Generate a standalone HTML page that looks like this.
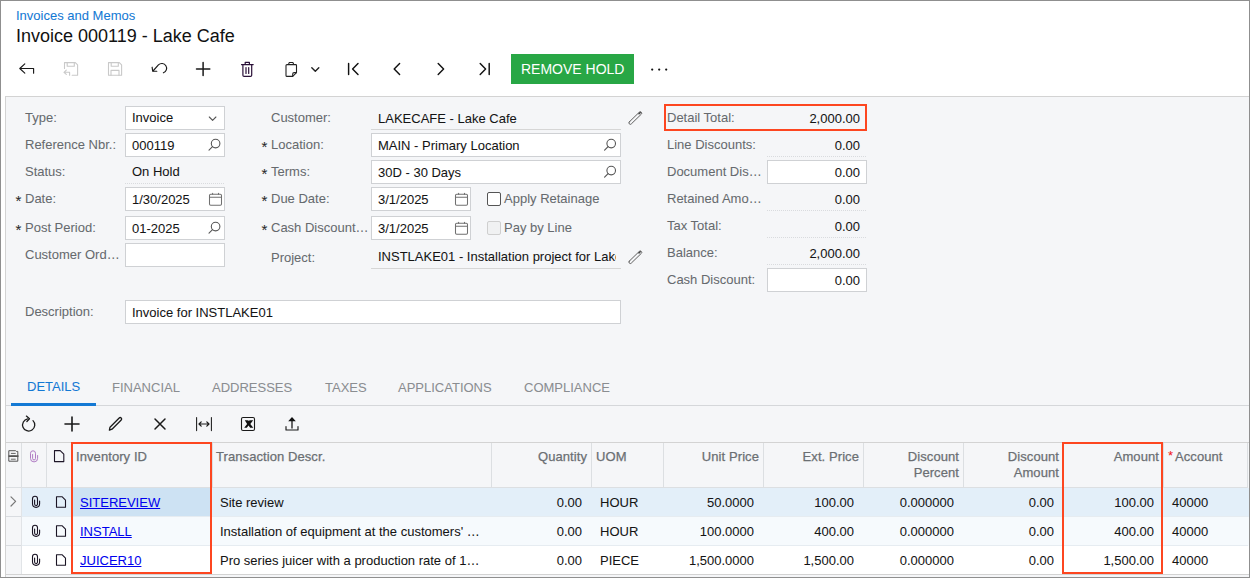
<!DOCTYPE html>
<html><head><meta charset="utf-8">
<style>
*{box-sizing:border-box;margin:0;padding:0}
html,body{width:1250px;height:578px;overflow:hidden;background:#fff}
body{position:relative;font-family:"Liberation Sans",sans-serif;font-size:13px;color:#000}
.a{position:absolute}
.t{position:absolute;white-space:nowrap;height:16px;-webkit-text-stroke:0.05px currentColor}
</style></head><body>
<div class="t" style="left:16px;top:8px;font-size:13px;line-height:16px;color:#1479d4;font-weight:normal;">Invoices and Memos</div>
<div class="t" style="left:16px;top:26px;font-size:18px;line-height:20px;color:#111;font-weight:normal;-webkit-text-stroke:0">Invoice 000119 - Lake Cafe</div>
<svg width="1250" height="578" style="left:0;top:0;position:absolute;overflow:visible" fill="none" stroke-linecap="round" stroke-linejoin="round" >
 <g stroke="#1a1a1a" stroke-width="1.15">
  <path d="M19.8 68.5 L24.8 63.8 M19.8 68.5 L24.8 73.2 M19.8 68.5 H33.6 V73.2"/>
 </g>
 <g stroke="#c9c9c9" stroke-width="1.1">
  <path d="M64.5 68.5 V62.6 H75.3 L77.6 64.9 V75.2 H72.2"/>
  <path d="M67.2 62.6 V66.2 H74.3 V62.6"/>
  <path d="M64 72.3 L66.3 70.2 M64 72.3 L66.3 74.4 M64 72.3 H69.6 V75.3"/>
  <path d="M108.5 62.6 H119.3 L121.6 64.9 V75.3 H108.5 Z"/>
  <path d="M111.2 62.6 V66.2 H118.3 V62.6 M111 75.3 V70.4 H119 V75.3"/>
 </g>
 <g stroke="#1a1a1a" stroke-width="1.15">
  <path d="M153 71 L158.4 64.9 A4.8 4.8 0 1 1 163.4 72.8"/>
  <path d="M152.1 67.2 L152.7 71.2 L156.8 71.2"/>
  <path d="M196.5 69 H209.8 M203.1 62.4 V75.6" stroke-width="1.5"/>
 </g>
 <g stroke="#2a1038" stroke-width="1.2">
  <path d="M241.5 64.6 H253.2 M245.2 64.4 V62.4 H249.4 V64.4"/>
  <path d="M242.9 64.8 V75.2 Q242.9 76.4 244.1 76.4 H250.5 Q251.7 76.4 251.7 75.2 V64.8"/>
  <path d="M246 67.5 V73.4 M248.7 67.5 V73.4"/>
 </g>
 <g stroke="#222" stroke-width="1.1">
  <path d="M286 65.6 Q286 64.6 287 64.6 H295.7 Q296.5 64.6 296.5 65.4 V72.6 L292.7 76.4 H287 Q286 76.4 286 75.4 Z"/>
  <path d="M288.5 64.4 L289.3 62.5 H292.9 L293.7 64.4"/>
  <path d="M292.7 76.2 V74 Q292.7 72.6 294.1 72.6 H296.4"/>
  <path d="M311.8 67.8 L315.3 71.3 L318.8 67.8" stroke-width="1.4"/>
 </g>
 <g stroke="#111" stroke-width="1.45">
  <path d="M348.6 63.4 V74.6 M358 63.6 L352.6 69 L358 74.4"/>
  <path d="M399.6 63.6 L394.2 69 L399.6 74.4"/>
  <path d="M438.2 63.6 L443.6 69 L438.2 74.4"/>
  <path d="M480.2 63.6 L485.6 69 L480.2 74.4 M489.2 63.4 V74.6"/>
 </g>
 <g fill="#111" stroke="none">
  <circle cx="652.2" cy="69.6" r="1.1"/><circle cx="659.2" cy="69.6" r="1.1"/><circle cx="666.2" cy="69.6" r="1.1"/>
 </g></svg>
<div class="a" style="left:511px;top:54px;width:123px;height:30px;background:#28a745"></div>
<div class="t" style="left:521px;top:61px;font-size:14px;line-height:16px;color:#fff;font-weight:normal;-webkit-text-stroke:0">REMOVE HOLD</div>
<div class="a" style="left:5px;top:96px;width:1245px;height:482px;background:#f5f6f8;border-top:1px solid #d3d3d3;border-left:1px solid #d3d3d3"></div>
<div class="a" style="left:125px;top:106px;width:100px;height:24px;background:#fff;border:1px solid #cfd1d4"></div>
<div class="a" style="left:125px;top:133px;width:100px;height:24px;background:#fff;border:1px solid #cfd1d4"></div>
<div class="a" style="left:125px;top:183px;width:100px;height:1px;background-image:linear-gradient(to right,#d9dbde 50%,transparent 50%);background-size:2px 1px"></div>
<div class="a" style="left:125px;top:187px;width:100px;height:24px;background:#fff;border:1px solid #cfd1d4"></div>
<div class="a" style="left:125px;top:216px;width:100px;height:24px;background:#fff;border:1px solid #cfd1d4"></div>
<div class="a" style="left:125px;top:243px;width:100px;height:24px;background:#fff;border:1px solid #cfd1d4"></div>
<div class="a" style="left:125px;top:300px;width:496px;height:24px;background:#fff;border:1px solid #cfd1d4"></div>
<div class="t" style="left:25px;top:110px;font-size:13px;line-height:16px;color:#666a6e;font-weight:normal;">Type:</div>
<div class="t" style="left:132px;top:110px;font-size:13px;line-height:16px;color:#141414;font-weight:normal;">Invoice</div>
<div class="t" style="left:25px;top:137px;font-size:13px;line-height:16px;color:#666a6e;font-weight:normal;">Reference Nbr.:</div>
<div class="t" style="left:132px;top:138px;font-size:13px;line-height:16px;color:#141414;font-weight:normal;">000119</div>
<div class="t" style="left:25px;top:164px;font-size:13px;line-height:16px;color:#666a6e;font-weight:normal;">Status:</div>
<div class="t" style="left:132px;top:164px;font-size:13px;line-height:16px;color:#141414;font-weight:normal;">On Hold</div>
<div class="t" style="left:15.5px;top:193px;font-size:15px;line-height:16px;color:#2a2a2a">*</div>
<div class="t" style="left:25px;top:191px;font-size:13px;line-height:16px;color:#666a6e;font-weight:normal;">Date:</div>
<div class="t" style="left:132px;top:192px;font-size:13px;line-height:16px;color:#141414;font-weight:normal;">1/30/2025</div>
<div class="t" style="left:15.5px;top:222px;font-size:15px;line-height:16px;color:#2a2a2a">*</div>
<div class="t" style="left:25px;top:220px;font-size:13px;line-height:16px;color:#666a6e;font-weight:normal;">Post Period:</div>
<div class="t" style="left:132px;top:221px;font-size:13px;line-height:16px;color:#141414;font-weight:normal;">01-2025</div>
<div class="t" style="left:25px;top:247px;font-size:13px;line-height:16px;color:#666a6e;font-weight:normal;">Customer Ord&hellip;</div>
<div class="t" style="left:25px;top:304px;font-size:13px;line-height:16px;color:#666a6e;font-weight:normal;">Description:</div>
<div class="t" style="left:132px;top:305px;font-size:13px;line-height:16px;color:#141414;font-weight:normal;">Invoice for INSTLAKE01</div>
<div class="a" style="left:371px;top:129px;width:250px;height:1px;background:#d6d6d6"></div>
<div class="a" style="left:371px;top:133px;width:250px;height:24px;background:#fff;border:1px solid #cfd1d4"></div>
<div class="a" style="left:371px;top:160px;width:250px;height:24px;background:#fff;border:1px solid #cfd1d4"></div>
<div class="a" style="left:371px;top:187px;width:100px;height:24px;background:#fff;border:1px solid #cfd1d4"></div>
<div class="a" style="left:371px;top:216px;width:100px;height:24px;background:#fff;border:1px solid #cfd1d4"></div>
<div class="a" style="left:371px;top:268px;width:250px;height:1px;background:#d6d6d6"></div>
<div class="t" style="left:271px;top:110px;font-size:13px;line-height:16px;color:#666a6e;font-weight:normal;">Customer:</div>
<div class="t" style="left:378px;top:111px;font-size:13px;line-height:16px;color:#141414;font-weight:normal;">LAKECAFE - Lake Cafe</div>
<div class="t" style="left:261.5px;top:139px;font-size:15px;line-height:16px;color:#2a2a2a">*</div>
<div class="t" style="left:271px;top:137px;font-size:13px;line-height:16px;color:#666a6e;font-weight:normal;">Location:</div>
<div class="t" style="left:378px;top:138px;font-size:13px;line-height:16px;color:#141414;font-weight:normal;">MAIN - Primary Location</div>
<div class="t" style="left:261.5px;top:166px;font-size:15px;line-height:16px;color:#2a2a2a">*</div>
<div class="t" style="left:271px;top:164px;font-size:13px;line-height:16px;color:#666a6e;font-weight:normal;">Terms:</div>
<div class="t" style="left:378px;top:165px;font-size:13px;line-height:16px;color:#141414;font-weight:normal;">30D - 30 Days</div>
<div class="t" style="left:261.5px;top:193px;font-size:15px;line-height:16px;color:#2a2a2a">*</div>
<div class="t" style="left:271px;top:191px;font-size:13px;line-height:16px;color:#666a6e;font-weight:normal;">Due Date:</div>
<div class="t" style="left:378px;top:192px;font-size:13px;line-height:16px;color:#141414;font-weight:normal;">3/1/2025</div>
<div class="t" style="left:261.5px;top:222px;font-size:15px;line-height:16px;color:#2a2a2a">*</div>
<div class="t" style="left:271px;top:220px;font-size:13px;line-height:16px;color:#666a6e;font-weight:normal;">Cash Discount&hellip;</div>
<div class="t" style="left:378px;top:221px;font-size:13px;line-height:16px;color:#141414;font-weight:normal;">3/1/2025</div>
<div class="t" style="left:271px;top:250px;font-size:13px;line-height:16px;color:#666a6e;font-weight:normal;">Project:</div>
<div class="t" style="left:378px;top:249px;width:238px;overflow:hidden;font-size:13px;line-height:16px;color:#141414">INSTLAKE01 - Installation project for Lake Cafe</div>
<div class="a" style="left:487px;top:192px;width:14px;height:14px;background:#fff;border:1.5px solid #555;border-radius:2px"></div>
<div class="a" style="left:487px;top:221px;width:14px;height:14px;background:#f0f1f2;border:1px solid #cfcfcf;border-radius:2px"></div>
<div class="t" style="left:504px;top:191px;font-size:13px;line-height:16px;color:#666a6e;font-weight:normal;">Apply Retainage</div>
<div class="t" style="left:504px;top:220px;font-size:13px;line-height:16px;color:#666a6e;font-weight:normal;">Pay by Line</div>
<div class="a" style="left:767px;top:156px;width:100px;height:1px;background-image:linear-gradient(to right,#d9dbde 50%,transparent 50%);background-size:2px 1px"></div>
<div class="a" style="left:767px;top:160px;width:100px;height:24px;background:#fff;border:1px solid #cfd1d4"></div>
<div class="a" style="left:767px;top:210px;width:100px;height:1px;background-image:linear-gradient(to right,#d9dbde 50%,transparent 50%);background-size:2px 1px"></div>
<div class="a" style="left:767px;top:237px;width:100px;height:1px;background-image:linear-gradient(to right,#d9dbde 50%,transparent 50%);background-size:2px 1px"></div>
<div class="a" style="left:767px;top:264px;width:100px;height:1px;background-image:linear-gradient(to right,#d9dbde 50%,transparent 50%);background-size:2px 1px"></div>
<div class="a" style="left:767px;top:268px;width:100px;height:24px;background:#fff;border:1px solid #cfd1d4"></div>
<div class="t" style="left:667px;top:110px;font-size:13px;line-height:16px;color:#666a6e;font-weight:normal;">Detail Total:</div>
<div class="t" style="right:390px;top:111px;font-size:13px;line-height:16px;color:#141414;font-weight:normal;text-align:right;">2,000.00</div>
<div class="t" style="left:667px;top:137px;font-size:13px;line-height:16px;color:#666a6e;font-weight:normal;">Line Discounts:</div>
<div class="t" style="right:390px;top:138px;font-size:13px;line-height:16px;color:#141414;font-weight:normal;text-align:right;">0.00</div>
<div class="t" style="left:667px;top:164px;font-size:13px;line-height:16px;color:#666a6e;font-weight:normal;">Document Dis&hellip;</div>
<div class="t" style="right:390px;top:165px;font-size:13px;line-height:16px;color:#141414;font-weight:normal;text-align:right;">0.00</div>
<div class="t" style="left:667px;top:191px;font-size:13px;line-height:16px;color:#666a6e;font-weight:normal;">Retained Amo&hellip;</div>
<div class="t" style="right:390px;top:192px;font-size:13px;line-height:16px;color:#141414;font-weight:normal;text-align:right;">0.00</div>
<div class="t" style="left:667px;top:218px;font-size:13px;line-height:16px;color:#666a6e;font-weight:normal;">Tax Total:</div>
<div class="t" style="right:390px;top:219px;font-size:13px;line-height:16px;color:#141414;font-weight:normal;text-align:right;">0.00</div>
<div class="t" style="left:667px;top:245px;font-size:13px;line-height:16px;color:#666a6e;font-weight:normal;">Balance:</div>
<div class="t" style="right:390px;top:246px;font-size:13px;line-height:16px;color:#141414;font-weight:normal;text-align:right;">2,000.00</div>
<div class="t" style="left:667px;top:272px;font-size:13px;line-height:16px;color:#666a6e;font-weight:normal;">Cash Discount:</div>
<div class="t" style="right:390px;top:273px;font-size:13px;line-height:16px;color:#141414;font-weight:normal;text-align:right;">0.00</div>
<svg width="1250" height="578" style="left:0;top:0;position:absolute;overflow:visible" fill="none" stroke-linecap="round" stroke-linejoin="round" ><g stroke="#555" stroke-width="1.1"><path d="M209.3 117 L212.6 120.3 L215.9 117"/><circle cx="215.6" cy="143.6" r="4.3"/><path d="M212.5 146.7 L209.0 150.2"/><circle cx="215.6" cy="226.6" r="4.3"/><path d="M212.5 229.7 L209.0 233.2"/><circle cx="611.2" cy="143.6" r="4.3"/><path d="M608.1 146.7 L604.6 150.2"/><circle cx="611.2" cy="170.6" r="4.3"/><path d="M608.1 173.7 L604.6 177.2"/><g stroke="#707070" stroke-width="1.05"><rect x="209.5" y="194.3" width="12" height="11" rx="1.2"/><path d="M209.5 197.2 H221.5 M212.6 193.2 V194.2 M218.5 193.2 V194.2"/></g><g stroke="#707070" stroke-width="1.05"><rect x="455.5" y="194.3" width="12" height="11" rx="1.2"/><path d="M455.5 197.2 H467.5 M458.6 193.2 V194.2 M464.5 193.2 V194.2"/></g><g stroke="#707070" stroke-width="1.05"><rect x="455.5" y="223.3" width="12" height="11" rx="1.2"/><path d="M455.5 226.2 H467.5 M458.6 222.2 V223.2 M464.5 222.2 V223.2"/></g></g><g><path d="M629.3 121.89999999999999 L639.3 112.19999999999999 A1.4 1.4 0 0 1 641.3 114.19999999999999 L631.3 123.89999999999999 A1.4 1.4 0 0 1 629.3 121.89999999999999 Z" stroke="#606060" stroke-width="1"/><path d="M639.0 113.69999999999999 L640.2 112.6" stroke="#444" stroke-width="1.5"/><path d="M629.3 261.1 L639.3 251.4 A1.4 1.4 0 0 1 641.3 253.4 L631.3 263.1 A1.4 1.4 0 0 1 629.3 261.1 Z" stroke="#606060" stroke-width="1"/><path d="M639.0 252.9 L640.2 251.8" stroke="#444" stroke-width="1.5"/></g></svg>
<div class="a" style="left:664px;top:104px;width:203px;height:27px;border:2px solid #fd4620"></div>
<div class="t" style="left:27px;top:379px;font-size:13px;line-height:16px;color:#1479d4;font-weight:normal;">DETAILS</div>
<div class="t" style="left:112px;top:380px;font-size:13px;line-height:16px;color:#8a8d91;font-weight:normal;">FINANCIAL</div>
<div class="t" style="left:212px;top:380px;font-size:13px;line-height:16px;color:#8a8d91;font-weight:normal;">ADDRESSES</div>
<div class="t" style="left:325px;top:380px;font-size:13px;line-height:16px;color:#8a8d91;font-weight:normal;">TAXES</div>
<div class="t" style="left:398px;top:380px;font-size:13px;line-height:16px;color:#8a8d91;font-weight:normal;">APPLICATIONS</div>
<div class="t" style="left:524px;top:380px;font-size:13px;line-height:16px;color:#8a8d91;font-weight:normal;">COMPLIANCE</div>
<div class="a" style="left:6px;top:405px;width:1244px;height:1px;background:#d5d7da"></div>
<div class="a" style="left:11px;top:403px;width:85px;height:3px;background:#1479d4"></div>
<svg width="1250" height="578" style="left:0;top:0;position:absolute;overflow:visible" fill="none" stroke-linecap="round" stroke-linejoin="round" ><g stroke="#1a1a1a" stroke-width="1.3">
 <path d="M33 420.6 A6.1 6.1 0 1 1 27.6 418.9"/><path d="M26.4 416.1 L29.5 418.7 L26.9 421.5"/>
 <path d="M65 424 H79 M72 417 V431" stroke-width="1.6"/>
 <path d="M109.4 430.2 L110 427.2 L119.2 418 Q120.2 417 121.2 418 Q122.2 419 121.2 420 L112 429.2 Z"/>
 <path d="M155 419 L165 429 M165 419 L155 429" stroke-width="1.5"/>
 <path d="M196.6 417.4 V430.6 M211.4 417.4 V430.6" stroke-width="1.05"/><path d="M199 424 H209 M199 424 L201.2 421.8 M199 424 L201.2 426.2 M209 424 L206.8 421.8 M209 424 L206.8 426.2" stroke-width="1.2"/>
 <rect x="241.5" y="417.5" width="13" height="13" rx="1.5" stroke-width="1.1"/>
 <path d="M286 426.5 V430 H298 V426.5" stroke-width="1.15"/><path d="M292 428 V420" stroke-width="1.3"/>
</g>
<path d="M244.8 420.3 H247.8 L248 420.8 L250.6 420.3 H253.2 L250.3 424 L253.3 427.8 H250.2 L248.5 425.6 L246.8 427.8 H244.2 L247.1 424 Z" fill="#111"/>
<path d="M288.2 421.2 L292 417 L295.8 421.2 Z" fill="#111"/>
</svg>
<div class="a" style="left:5px;top:442px;width:1245px;height:133px;background:#f5f6f8;border-top:1px solid #d3d3d3;border-left:1px solid #d3d3d3;border-bottom:1px solid #d3d3d3"></div>
<div class="a" style="left:21px;top:488px;width:1228px;height:29px;background:#e3eff9"></div>
<div class="a" style="left:71px;top:488px;width:141px;height:29px;background:#cde2f3"></div>
<div class="a" style="left:21px;top:517px;width:1228px;height:29px;background:#f6fafd"></div>
<div class="a" style="left:21px;top:546px;width:1228px;height:28px;background:#fff"></div>
<div class="a" style="left:6px;top:516px;width:1242px;height:1px;background:#e6ecf1"></div>
<div class="a" style="left:6px;top:545px;width:1242px;height:1px;background:#e6ecf1"></div>
<div class="a" style="left:6px;top:516px;width:15px;height:1px;background:#d9dce0"></div>
<div class="a" style="left:6px;top:545px;width:15px;height:1px;background:#d9dce0"></div>
<div class="a" style="left:6px;top:487px;width:1242px;height:1px;background:#dcdfe2"></div>
<div class="a" style="left:21px;top:443px;width:1px;height:45px;background:#dcdfe2"></div>
<div class="a" style="left:46px;top:443px;width:1px;height:45px;background:#dcdfe2"></div>
<div class="a" style="left:71px;top:443px;width:1px;height:45px;background:#dcdfe2"></div>
<div class="a" style="left:212px;top:443px;width:1px;height:45px;background:#dcdfe2"></div>
<div class="a" style="left:491px;top:443px;width:1px;height:45px;background:#dcdfe2"></div>
<div class="a" style="left:591px;top:443px;width:1px;height:45px;background:#dcdfe2"></div>
<div class="a" style="left:663px;top:443px;width:1px;height:45px;background:#dcdfe2"></div>
<div class="a" style="left:763px;top:443px;width:1px;height:45px;background:#dcdfe2"></div>
<div class="a" style="left:863px;top:443px;width:1px;height:45px;background:#dcdfe2"></div>
<div class="a" style="left:963px;top:443px;width:1px;height:45px;background:#dcdfe2"></div>
<div class="a" style="left:1063px;top:443px;width:1px;height:45px;background:#dcdfe2"></div>
<div class="a" style="left:1163px;top:443px;width:1px;height:45px;background:#dcdfe2"></div>
<div class="a" style="left:1247px;top:443px;width:1px;height:45px;background:#dcdfe2"></div>
<div class="a" style="left:21px;top:488px;width:1px;height:86px;background:#e1e4e7"></div>
<svg width="1250" height="578" style="left:0;top:0;position:absolute;overflow:visible" fill="none" stroke-linecap="round" stroke-linejoin="round" ><g stroke="#555" stroke-width="1">
 <path d="M9.2 450.7 H15.6 L16.4 451.4 H17.8 V461.2 H9.2 Z"/>
 <path d="M9.2 456.1 H17.8" stroke-width="1.8"/>
 <path d="M11.3 453.4 H15.3 M11.3 456.2 H15.3 M11.3 459.2 H15.3" stroke-width="0.9"/>
</g>
<g stroke="#b07cc4" stroke-width="1"><path d="M32.6 454.5 V458.5 A1.45 1.45 0 0 0 35.5 458.5 V453.3 A2.5 2.5 0 0 0 30.5 453.3 V458.35 A3.55 3.55 0 0 0 37.6 458.35 V455.5"/></g>
<g stroke="#1e1628" stroke-width="1.1"><path d="M54.5 450.6 H60.2 L63.8 454.2 V461.6 H54.5 Z"/></g>
</svg>
<div class="t" style="left:76px;top:449px;font-size:13.0px;line-height:16px;color:#6b6f73;font-weight:normal;font-size:13px;letter-spacing:0.08px;-webkit-text-stroke:0.25px #6b6f73">Inventory ID</div>
<div class="t" style="left:216px;top:449px;font-size:13.0px;line-height:16px;color:#6b6f73;font-weight:normal;font-size:13px;letter-spacing:0.08px;-webkit-text-stroke:0.25px #6b6f73">Transaction Descr.</div>
<div class="t" style="right:663px;top:449px;font-size:13.0px;line-height:16px;color:#6b6f73;font-weight:normal;text-align:right;font-size:13px;letter-spacing:0.08px;-webkit-text-stroke:0.25px #6b6f73">Quantity</div>
<div class="t" style="left:596px;top:449px;font-size:13.0px;line-height:16px;color:#6b6f73;font-weight:normal;font-size:13px;letter-spacing:0.08px;-webkit-text-stroke:0.25px #6b6f73">UOM</div>
<div class="t" style="right:491px;top:449px;font-size:13.0px;line-height:16px;color:#6b6f73;font-weight:normal;text-align:right;font-size:13px;letter-spacing:0.08px;-webkit-text-stroke:0.25px #6b6f73">Unit Price</div>
<div class="t" style="right:391px;top:449px;font-size:13.0px;line-height:16px;color:#6b6f73;font-weight:normal;text-align:right;font-size:13px;letter-spacing:0.08px;-webkit-text-stroke:0.25px #6b6f73">Ext. Price</div>
<div class="t" style="right:291px;top:449px;font-size:13.0px;line-height:16px;color:#6b6f73;font-weight:normal;text-align:right;font-size:13px;letter-spacing:0.08px;-webkit-text-stroke:0.25px #6b6f73">Discount</div>
<div class="t" style="right:291px;top:465px;font-size:13.0px;line-height:16px;color:#6b6f73;font-weight:normal;text-align:right;font-size:13px;letter-spacing:0.08px;-webkit-text-stroke:0.25px #6b6f73">Percent</div>
<div class="t" style="right:191px;top:449px;font-size:13.0px;line-height:16px;color:#6b6f73;font-weight:normal;text-align:right;font-size:13px;letter-spacing:0.08px;-webkit-text-stroke:0.25px #6b6f73">Discount</div>
<div class="t" style="right:191px;top:465px;font-size:13.0px;line-height:16px;color:#6b6f73;font-weight:normal;text-align:right;font-size:13px;letter-spacing:0.08px;-webkit-text-stroke:0.25px #6b6f73">Amount</div>
<div class="t" style="right:91px;top:449px;font-size:13.0px;line-height:16px;color:#6b6f73;font-weight:normal;text-align:right;font-size:13px;letter-spacing:0.08px;-webkit-text-stroke:0.25px #6b6f73">Amount</div>
<div class="t" style="left:1168px;top:448px;font-size:13px;line-height:16px;color:#f21c1c;font-weight:normal;">*</div>
<div class="t" style="left:1175px;top:449px;font-size:13.0px;line-height:16px;color:#6b6f73;font-weight:normal;font-size:13px;letter-spacing:0.08px;-webkit-text-stroke:0.25px #6b6f73">Account</div>
<div class="t" style="left:80px;top:495px;font-size:13px;line-height:16px;color:#0000ee;text-decoration:underline">SITEREVIEW</div>
<div class="t" style="left:220px;top:495px;font-size:13px;line-height:16px;color:#141414;font-weight:normal;">Site review</div>
<div class="t" style="right:668px;top:495px;font-size:13px;line-height:16px;color:#141414;font-weight:normal;text-align:right;">0.00</div>
<div class="t" style="left:600px;top:495px;font-size:13px;line-height:16px;color:#141414;font-weight:normal;">HOUR</div>
<div class="t" style="right:496px;top:495px;font-size:13px;line-height:16px;color:#141414;font-weight:normal;text-align:right;">50.0000</div>
<div class="t" style="right:396px;top:495px;font-size:13px;line-height:16px;color:#141414;font-weight:normal;text-align:right;">100.00</div>
<div class="t" style="right:296px;top:495px;font-size:13px;line-height:16px;color:#141414;font-weight:normal;text-align:right;">0.000000</div>
<div class="t" style="right:196px;top:495px;font-size:13px;line-height:16px;color:#141414;font-weight:normal;text-align:right;">0.00</div>
<div class="t" style="right:96px;top:495px;font-size:13px;line-height:16px;color:#141414;font-weight:normal;text-align:right;">100.00</div>
<div class="t" style="left:1172px;top:495px;font-size:13px;line-height:16px;color:#141414;font-weight:normal;">40000</div>
<div class="t" style="left:80px;top:524px;font-size:13px;line-height:16px;color:#0000ee;text-decoration:underline">INSTALL</div>
<div class="t" style="left:220px;top:524px;font-size:13px;line-height:16px;color:#141414;font-weight:normal;">Installation of equipment at the customers' &hellip;</div>
<div class="t" style="right:668px;top:524px;font-size:13px;line-height:16px;color:#141414;font-weight:normal;text-align:right;">0.00</div>
<div class="t" style="left:600px;top:524px;font-size:13px;line-height:16px;color:#141414;font-weight:normal;">HOUR</div>
<div class="t" style="right:496px;top:524px;font-size:13px;line-height:16px;color:#141414;font-weight:normal;text-align:right;">100.0000</div>
<div class="t" style="right:396px;top:524px;font-size:13px;line-height:16px;color:#141414;font-weight:normal;text-align:right;">400.00</div>
<div class="t" style="right:296px;top:524px;font-size:13px;line-height:16px;color:#141414;font-weight:normal;text-align:right;">0.000000</div>
<div class="t" style="right:196px;top:524px;font-size:13px;line-height:16px;color:#141414;font-weight:normal;text-align:right;">0.00</div>
<div class="t" style="right:96px;top:524px;font-size:13px;line-height:16px;color:#141414;font-weight:normal;text-align:right;">400.00</div>
<div class="t" style="left:1172px;top:524px;font-size:13px;line-height:16px;color:#141414;font-weight:normal;">40000</div>
<div class="t" style="left:80px;top:553px;font-size:13px;line-height:16px;color:#0000ee;text-decoration:underline">JUICER10</div>
<div class="t" style="left:220px;top:553px;font-size:13px;line-height:16px;color:#141414;font-weight:normal;">Pro series juicer with a production rate of 1&hellip;</div>
<div class="t" style="right:668px;top:553px;font-size:13px;line-height:16px;color:#141414;font-weight:normal;text-align:right;">0.00</div>
<div class="t" style="left:600px;top:553px;font-size:13px;line-height:16px;color:#141414;font-weight:normal;">PIECE</div>
<div class="t" style="right:496px;top:553px;font-size:13px;line-height:16px;color:#141414;font-weight:normal;text-align:right;">1,500.0000</div>
<div class="t" style="right:396px;top:553px;font-size:13px;line-height:16px;color:#141414;font-weight:normal;text-align:right;">1,500.00</div>
<div class="t" style="right:296px;top:553px;font-size:13px;line-height:16px;color:#141414;font-weight:normal;text-align:right;">0.000000</div>
<div class="t" style="right:196px;top:553px;font-size:13px;line-height:16px;color:#141414;font-weight:normal;text-align:right;">0.00</div>
<div class="t" style="right:96px;top:553px;font-size:13px;line-height:16px;color:#141414;font-weight:normal;text-align:right;">1,500.00</div>
<div class="t" style="left:1172px;top:553px;font-size:13px;line-height:16px;color:#141414;font-weight:normal;">40000</div>
<svg width="1250" height="578" style="left:0;top:0;position:absolute;overflow:visible" fill="none" stroke-linecap="round" stroke-linejoin="round" ><g stroke="#1a1424" stroke-width="1.1"><path d="M34.6 500 V504 A1.45 1.45 0 0 0 37.5 504 V498.8 A2.5 2.5 0 0 0 32.5 498.8 V503.85 A3.55 3.55 0 0 0 39.6 503.85 V501"/><path d="M56.5 496.7 H62 L65.5 500.2 V507.3 H56.5 Z"/><path d="M34.6 529 V533 A1.45 1.45 0 0 0 37.5 533 V527.8 A2.5 2.5 0 0 0 32.5 527.8 V532.85 A3.55 3.55 0 0 0 39.6 532.85 V530"/><path d="M56.5 525.7 H62 L65.5 529.2 V536.3 H56.5 Z"/><path d="M34.6 558 V562 A1.45 1.45 0 0 0 37.5 562 V556.8 A2.5 2.5 0 0 0 32.5 556.8 V561.85 A3.55 3.55 0 0 0 39.6 561.85 V559"/><path d="M56.5 554.7 H62 L65.5 558.2 V565.3 H56.5 Z"/></g><path d="M11 496.8 L15.6 501.4 L11 506" stroke="#777" stroke-width="1.2"/></svg>
<div class="a" style="left:71px;top:442px;width:141px;height:132px;border:2px solid #fd4620"></div>
<div class="a" style="left:1062px;top:442px;width:101px;height:132px;border:2px solid #fd4620"></div>
<div class="a" style="left:0px;top:0px;width:1250px;height:578px;border:1px solid #8f8f8f"></div>
</body></html>
